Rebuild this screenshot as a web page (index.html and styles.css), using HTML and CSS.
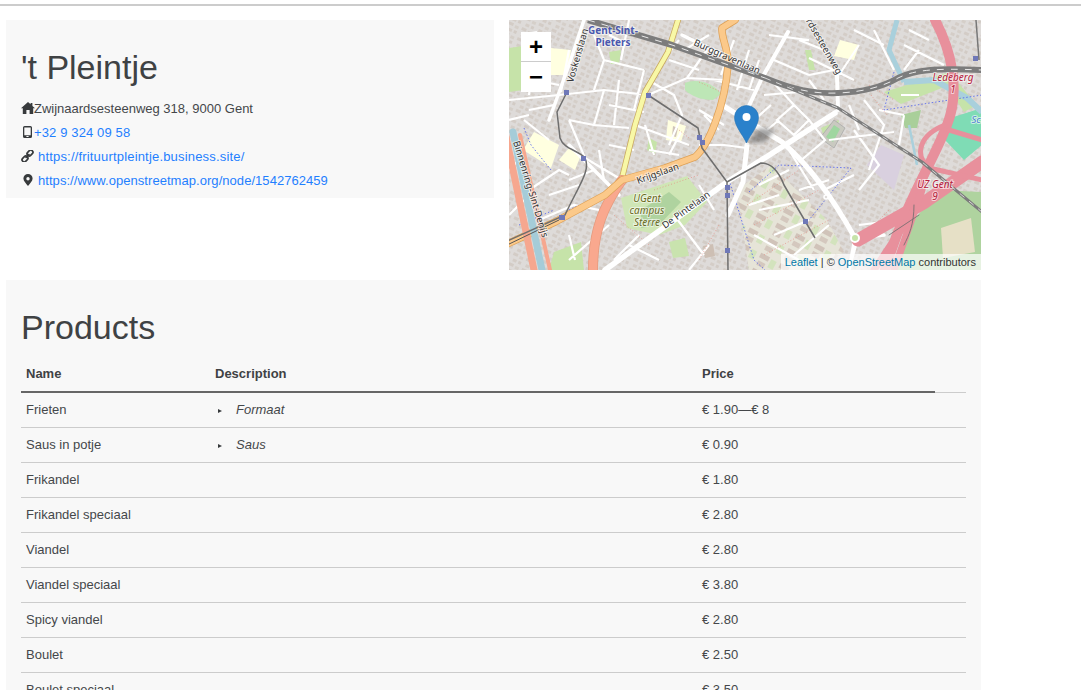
FILE: index.html
```html
<!DOCTYPE html>
<html lang="en">
<head>
    <meta charset="UTF-8">
    <meta name="viewport" content="width=device-width, initial-scale=1.0">
    <title>'t Pleintje</title>
    <link rel="stylesheet" href="styles.css">
</head>
<body>
    <div class="topline"></div>
    <main class="page">
        <div class="top-row">
            <!-- Shop details -->
            <section class="card info">
                <h2>'t Pleintje</h2>
                <ul class="contact">
                    <li>
                        <svg class="ic ic-home" viewBox="0 0 14 12"><path d="M7 0 L9.6 2.3 V1 H11.4 V3.9 L14 6.3 H12.2 V12 H8.6 V8 H5.4 V12 H1.8 V6.3 H0 Z"/></svg>Zwijnaardsesteenweg 318, 9000 Gent
                    </li>
                    <li>
                        <svg class="ic ic-phone" viewBox="0 0 9 12"><path fill-rule="evenodd" d="M1.6 0 H7.4 A1.6 1.6 0 0 1 9 1.6 V10.4 A1.6 1.6 0 0 1 7.4 12 H1.6 A1.6 1.6 0 0 1 0 10.4 V1.6 A1.6 1.6 0 0 1 1.6 0 Z M1.3 1.4 V9.2 H7.7 V1.4 Z M3.4 10 V11 H5.6 V10 Z"/></svg><a href="#" class="tel">+32 9 324 09 58</a>
                    </li>
                    <li>
                        <svg class="ic ic-link" viewBox="0 0 13 12"><g fill="none" stroke="#373a3c" stroke-width="1.7"><rect x="5.8" y="0.9" width="6.4" height="4.2" rx="2" transform="rotate(-45 9 3)"/><rect x="0.8" y="6.9" width="6.4" height="4.2" rx="2" transform="rotate(-45 4 9)"/><path d="M4.6 8 L8.4 4"/></g></svg><a href="#" class="site">https://frituurtpleintje.business.site/</a>
                    </li>
                    <li>
                        <svg class="ic ic-pin" viewBox="0 0 10 12"><path fill-rule="evenodd" d="M5 0 A4.6 4.6 0 0 1 9.6 4.6 C9.6 7.2 6.8 9.8 5 12 C3.2 9.8 0.4 7.2 0.4 4.6 A4.6 4.6 0 0 1 5 0 Z M5 3 A1.7 1.7 0 1 0 5 6.4 A1.7 1.7 0 1 0 5 3 Z"/></svg><a href="#" class="osm">https://www.openstreetmap.org/node/1542762459</a>
                    </li>
                </ul>
            </section>

            <!-- Map -->
            <div class="map">
                <svg class="map-tiles" viewBox="0 0 472 250" width="472" height="250">
                    <defs>
                        <pattern id="houses" width="14" height="11" patternUnits="userSpaceOnUse" patternTransform="rotate(24)">
                            <rect width="14" height="11" fill="#dedbd9"/>
                            <rect x="1" y="1" width="5" height="3" fill="#d3ccc6"/>
                            <rect x="8" y="2" width="4" height="3" fill="#d5cfc9"/>
                            <rect x="3" y="7" width="4" height="3" fill="#d4cdc7"/>
                            <rect x="9" y="7" width="3" height="3" fill="#d2cbc5"/>
                        </pattern>
                        <pattern id="campus" width="22" height="17" patternUnits="userSpaceOnUse" patternTransform="rotate(28)">
                            <rect width="22" height="17" fill="#e6e4d8"/>
                            <rect x="2" y="2" width="10" height="5" fill="#d0c3b9"/>
                            <rect x="14" y="3" width="6" height="9" fill="#d3e3bd"/>
                            <rect x="3" y="10" width="8" height="5" fill="#d4c8be"/>
                        </pattern>
                        <filter id="soft"><feGaussianBlur stdDeviation="2"/></filter>
                    </defs>

                    <rect width="472" height="250" fill="url(#houses)"/>

                    <!-- landuse -->
                    <g>
                        <path fill="url(#campus)" d="M228 170 L262 145 L318 200 L335 232 L310 250 L240 250 Z"/>
                        <path fill="url(#houses)" d="M120 172 L170 152 L205 178 L215 250 L95 250 Z"/>
                        <path fill="#cfe6b5" d="M112 178 L178 156 L198 182 L176 205 L150 215 L118 208 Z"/>
                        <path fill="#afd39f" d="M132 190 L160 172 L172 182 L150 205 L132 208 Z"/>
                        <path fill="#c9e3ae" d="M160 222 L176 218 L180 236 L164 238 Z"/>
                        <path fill="#cdbfb4" d="M194 226 L204 224 L206 236 L196 238 Z"/>
                        <path fill="#ffffe0" d="M25 112 L50 125 L42 148 L30 140 L14 130 Z"/>
                        <path fill="#ffffe0" d="M42 28 L62 30 L58 55 L42 55 Z"/>
                        <path fill="#ffffe0" d="M159 100 L177 106 L172 122 L157 120 Z"/>
                        <path fill="#d0c5ba" d="M164 106 L169 108 L167 117 L163 116 Z"/>
                        <path fill="#ffffe0" d="M331 20 L350 25 L345 40 L325 36 Z"/>
                        <path fill="#bde6b6" d="M176 63 C185 58 205 62 212 74 L204 80 C192 80 182 76 176 70 Z"/>
                        <path fill="#d9d0df" d="M372 125 L395 135 L385 170 L358 145 Z"/>
                        <path fill="#a9cf9a" d="M392 95 L412 90 L408 108 L396 108 Z"/>
                        <path fill="#7fdcb5" d="M435 100 L473 88 L473 125 L455 140 L436 120 Z"/>
                        <path fill="#afd39f" d="M395 212 L430 170 L473 172 L473 250 L385 250 Z"/>
                        <path fill="#e6e0c6" d="M432 208 L462 198 L466 232 L434 238 Z"/>
                        <path fill="#c6e3a9" d="M375 72 L440 52 L468 85 L455 92 L438 66 L392 84 Z"/>
                        <path fill="#c6e3a9" d="M0 28 L14 26 L14 70 L0 72 Z"/>
                        <path fill="#c6e3a9" d="M312 108 L330 100 L326 124 L316 120 Z"/>
                        <path fill="#c6e3a9" d="M45 232 L72 222 L75 250 L40 250 Z"/>
                        <path fill="#c6e3a9" d="M100 32 L112 30 L110 44 L102 44 Z"/>
                        <path fill="#c6e3a9" d="M296 30 L302 30 L306 50 L300 50 Z"/>
                        <path fill="#c6e3a9" d="M140 118 L148 122 L146 134 L138 130 Z"/>
                        <path fill="#ffffe0" d="M60 128 L72 135 L66 150 L50 140 Z"/>
                        <!-- sports pitch -->
                        <path fill="#c9c9c0" stroke="#aaa" stroke-width="0.8" d="M325 100 L336 108 L325 128 L311 118 Z"/>
                        <path fill="#9fd6a0" d="M325 105 L331 109 L324 122 L317 117 Z"/>
                    </g>

                    <!-- small streets -->
                    <path fill="none" stroke="#fff" stroke-width="2.2" d="
                        M0 80 L50 75 L95 70 L139 75 M95 70 L85 105 L60 100 M85 105 L120 108
                        M60 100 L76 138 M76 138 L113 160 M20 170 L50 150 L60 155 M30 200 L65 185 L90 190
                        M60 30 L52 72 M85 15 L95 40 L135 50 M95 40 L85 70 M135 50 L125 90
                        M139 75 L178 58 L216 60 M178 58 L198 30 M150 45 L170 20
                        M139 60 L165 75 L173 95 L160 125 M126 105 L180 125 M190 125 L215 125 L238 128
                        M205 60 L245 70 M240 70 L250 40 M215 105 L190 90
                        M285 85 L300 100 L285 115 L268 100 Z M300 100 L316 120 L290 142
                        M265 40 L300 55 M300 55 L325 50 M350 25 L330 55 M365 10 L385 50 M345 60 L300 38
                        M245 143 L270 130 M280 130 L305 170 M345 110 L370 145 L350 170 M320 120 L385 112
                        M355 80 L375 105 L360 150 M392 75 L410 75 M395 25 L435 45
                        M60 215 L66 240 M100 205 L60 240 M165 195 L195 235 M200 225 L180 250
                        M290 170 L320 160 M250 190 L300 180 M315 170 L345 155 M350 205 L390 200 M350 215 L340 250
                        M12 15 L28 12 M0 100 L20 95 M140 130 L170 135 M136 105 L145 135 M0 195 L15 180
                        M100 85 L135 92 M110 60 L105 105 M100 125 L125 130 M90 130 L95 160 M60 160 L85 150
                        M20 90 L45 85 M15 100 L40 120 M25 60 L50 65 M25 30 L20 75 M100 15 L120 25 M120 0 L112 40
                        M160 40 L190 50 M175 30 L205 40 M200 15 L175 30 M225 20 L212 55 M240 30 L228 70
                        M160 135 L172 112 M195 95 L210 110 M245 100 L262 85 M258 110 L270 100 M255 75 L290 72
                        M262 60 L285 85 M300 60 L315 80 M340 85 L350 110 M370 90 L395 95 M395 95 L390 125
                        M400 10 L420 20 M410 30 L395 50 M345 10 L375 25 M290 20 L320 32 M260 15 L300 20
                        M280 150 L250 165 M270 175 L240 185 M300 200 L265 215 M320 205 L285 235 M245 215 L290 240
                        M120 225 L150 240 M105 240 L130 215 M190 165 L205 190 M0 150 L10 140 M40 175 L70 165
                    "/>
                    <!-- fences and paths -->
                    <path fill="none" stroke="#e58a80" stroke-width="0.7" stroke-dasharray="1 2" d="M238 185 L290 150 M245 205 L310 170 M255 235 L320 200 M190 62 L212 72 M170 110 L180 118 M145 170 L190 155 M360 65 L385 80 M362 75 L378 95 M210 205 L190 240 M105 195 L140 225 M380 190 L360 210"/>

                    <!-- water -->
                    <path fill="none" stroke="#a9d0dc" stroke-width="5" d="M388 0 L380 30 L395 62"/>
                    <path fill="none" stroke="#a9d0dc" stroke-width="6" d="M395 62 L425 60 L458 78 L473 92"/>
                    <path fill="none" stroke="#a9d0dc" stroke-width="2.5" d="M400 105 L408 145"/>

                    <!-- boundaries -->
                    <path fill="none" stroke="#4a5cf0" stroke-width="0.8" stroke-dasharray="1.5 2" d="M15 108 L22 125 L42 150 M220 160 L245 240 L256 250 M240 172 L270 145 L342 148 M385 52 L375 90 L473 75 M342 148 L300 200 M10 205 L45 190 M60 190 L70 185"/>

                    <!-- main roads -->
                    <g fill="none" stroke-linejoin="round" stroke-linecap="round">
                        <path stroke="#fff" stroke-width="5.5" d="M96 250 L218 162 L326 93"/>
                        <path stroke="#fff" stroke-width="5" d="M213 85 L273 122 C300 145 322 175 346 218"/>
                        <path stroke="#fff" stroke-width="5" d="M238 125 L234 162 L219 195"/>
                        <path stroke="#fff" stroke-width="4" d="M279 12 L253 58 L239 88"/>
                        <path stroke="#fff" stroke-width="4" d="M328 55 L329 90"/>
                        <path stroke="#fff" stroke-width="3.5" d="M173 15 L240 48 M60 125 L110 175"/>
                        <path stroke="#fff" stroke-width="3.5" d="M346 218 L340 250 M346 218 L375 215"/>
                        <path stroke="#fff" stroke-width="3.5" d="M75 0 L60 45 L40 100"/>
                        <path stroke="#c9a85e" stroke-width="6" d="M169 0 L159 32 L136 72 L126 105 L113 158"/>
                        <path stroke="#f8f8a6" stroke-width="4.5" d="M169 0 L159 32 L136 72 L126 105 L113 158"/>
                        <path stroke="#e59a7e" stroke-width="10" d="M113 160 C95 185 84 210 84 250"/>
                        <path stroke="#f9a88e" stroke-width="8.5" d="M113 160 C95 185 84 210 84 250"/>
                        <path stroke="#dea055" stroke-width="7.5" d="M-4 225 L46 202 L96 175 L113 160 L156 148 L186 137 C200 125 216 85 219 45 C220 30 212 18 213 8 L226 0"/>
                        <path stroke="#fbc98a" stroke-width="6" d="M-4 225 L46 202 L96 175 L113 160 L156 148 L186 137 C200 125 216 85 219 45 C220 30 212 18 213 8 L226 0"/>
                        <path stroke="#f6a78f" stroke-width="7" d="M-4 112 L25 250"/>
                        <path stroke="#a5ccd8" stroke-width="7" d="M4 112 L33 250"/>
                        <path stroke="#f6a78f" stroke-width="4" d="M11 115 L41 250"/>
                        <path stroke="#e8909c" stroke-width="10" d="M426 0 C442 30 452 70 438 105 C425 140 395 185 376 250"/>
                        <path stroke="#e8909c" stroke-width="13" d="M473 142 L416 182 L349 220"/>
                        <path stroke="#e8909c" stroke-width="5" d="M436 105 C410 115 405 135 420 148 L473 160 M420 148 L395 210 M440 110 L473 120"/>
                        <path stroke="#e8909c" stroke-width="7" d="M413 170 L385 250 M365 250 L405 190"/>
                        <path stroke="#6b6b6b" stroke-width="0.8" d="M405 185 C405 205 400 215 395 225 M380 215 L410 195"/>
                    </g>

                    <!-- rail and tram -->
                    <g fill="none" stroke-linejoin="round">
                        <path stroke="#7c7c7c" stroke-width="6" d="M79 0 L163 25 L256 58 C285 70 305 74 329 73 C355 72 375 66 389 58 C405 50 425 48 473 50"/>
                        <path stroke="#e8e8e8" stroke-width="1" stroke-dasharray="7 7" d="M79 0 L163 25 L256 58 C285 70 305 74 329 73 C355 72 375 66 389 58 C405 50 425 48 473 50"/>
                        <path stroke="#7c7c7c" stroke-width="3" d="M256 58 L329 88 L413 142 L473 192"/>
                        <path stroke="#eee" stroke-width="0.8" stroke-dasharray="6 6" d="M256 58 L329 88 L413 142 L473 192"/>
                        <path stroke="#6e6e6e" stroke-width="1.5" d="M139 75 L189 108 L193 128 L218 162 L219 250"/>
                        <path stroke="#6e6e6e" stroke-width="1.5" d="M218 162 L252 143 C262 143 270 152 275 165 L306 218"/>
                        <path stroke="#6e6e6e" stroke-width="1.5" d="M58 72 L48 92 L51 118 C55 130 70 130 76 138 C82 150 70 165 56 195 L-4 222"/>
                        <path stroke="#555" stroke-width="1" d="M-4 226 L50 200"/>
                        <path stroke="#777" stroke-width="1.5" d="M467 0 L470 40"/>
                    </g>
                    <g fill="#6f78b8">
                        <rect x="55" y="70" width="5" height="5"/>
                        <rect x="137" y="73" width="5" height="5"/>
                        <rect x="188" y="115" width="5" height="5"/>
                        <rect x="191" y="120" width="5" height="5"/>
                        <rect x="72" y="136" width="5" height="5"/>
                        <rect x="50" y="195" width="6" height="5"/>
                        <rect x="216" y="165" width="5" height="5"/>
                        <rect x="216" y="173" width="5" height="5"/>
                        <rect x="216" y="228" width="5" height="5"/>
                        <rect x="294" y="199" width="5" height="5"/>
                        <rect x="464" y="36" width="5" height="5"/>
                    </g>
                    <circle cx="346" cy="218" r="4" fill="#c6e3a9" stroke="#fff" stroke-width="2"/>
                    <circle cx="317" cy="177" r="2" fill="#dfdcda" stroke="#fff" stroke-width="1.5"/>

                    <!-- labels -->
                    <g class="lbl">
                        <text class="lbl-station" x="104" y="14">Gent-Sint-</text>
                        <text class="lbl-station" x="104" y="26">Pieters</text>
                        <text x="64" y="63" transform="rotate(-74 64 63)">Voskenslaan</text>
                        <text x="184" y="25" transform="rotate(24 184 25)">Burggravenlaan</text>
                        <text class="lbl-end" x="328" y="55" transform="rotate(60 328 55)">Zwijnaardsesteenweg</text>
                        <text x="129" y="164" transform="rotate(-20 129 164)">Krijgslaan</text>
                        <text x="156" y="209" transform="rotate(-36 156 209)">De Pintelaan</text>
                        <text x="4" y="122" transform="rotate(73 4 122)">Binnenring-Sint-Denijs</text>
                        <text class="lbl-campus" x="138" y="182">UGent</text>
                        <text class="lbl-campus" x="138" y="194">campus</text>
                        <text class="lbl-campus" x="138" y="206">Sterre</text>
                        <text class="lbl-ring" x="444" y="61">Ledeberg</text>
                        <text class="lbl-ring" x="444" y="73">1</text>
                        <text class="lbl-ring" x="426" y="168">UZ Gent</text>
                        <text class="lbl-ring" x="426" y="180">9</text>
                        <text class="lbl-water" x="467" y="103">Sc</text>
                    </g>

                    <!-- marker -->
                    <path fill="#333" opacity="0.45" filter="url(#soft)" d="M238 123 L250 108 L266 110 L256 122 Z"/>
                    <path fill="#2a81cb" stroke="#2573b5" stroke-width="0.6" d="M237.5 123 C234 115 225.5 106 225.5 97.5 A12 12 0 0 1 249.5 97.5 C249.5 106 241 115 237.5 123 Z"/>
                    <circle cx="237.5" cy="97" r="4" fill="#fff"/>
                </svg>

                <div class="zoom">
                    <a href="#" class="zoom-btn">+</a>
                    <a href="#" class="zoom-btn">&minus;</a>
                </div>
                <div class="attribution"><a href="#">Leaflet</a> | © <a href="#">OpenStreetMap</a> contributors</div>
            </div>
        </div>

        <!-- Product list -->
        <section class="card products">
            <h2>Products</h2>
            <table>
                <thead>
                    <tr>
                        <th class="col-name">Name</th>
                        <th class="col-desc">Description</th>
                        <th class="col-price">Price</th>
                        <th class="col-rest"></th>
                    </tr>
                </thead>
                <tbody>
                    <tr><td>Frieten</td><td><span class="toggle">Formaat</span></td><td>€ 1.90—€ 8</td><td></td></tr>
                    <tr><td>Saus in potje</td><td><span class="toggle">Saus</span></td><td>€ 0.90</td><td></td></tr>
                    <tr><td>Frikandel</td><td></td><td>€ 1.80</td><td></td></tr>
                    <tr><td>Frikandel speciaal</td><td></td><td>€ 2.80</td><td></td></tr>
                    <tr><td>Viandel</td><td></td><td>€ 2.80</td><td></td></tr>
                    <tr><td>Viandel speciaal</td><td></td><td>€ 3.80</td><td></td></tr>
                    <tr><td>Spicy viandel</td><td></td><td>€ 2.80</td><td></td></tr>
                    <tr><td>Boulet</td><td></td><td>€ 2.50</td><td></td></tr>
                    <tr><td>Boulet speciaal</td><td></td><td>€ 3.50</td><td></td></tr>
                </tbody>
            </table>
        </section>
    </main>
</body>
</html>
```

FILE: styles.css
```css
/* Basic styles for the page */
html, body {
    height: 690px;
    overflow: hidden;
}

body {
    margin: 0;
    background-color: #fff;
    color: #44474a;
    font-family: "Liberation Sans", Arial, sans-serif;
    font-size: 13px;
    line-height: 21px;
}

a {
    color: #1f7fff;
    text-decoration: none;
}

h2 {
    margin: 0 0 10px;
    font-size: 34px;
    font-weight: 400;
    line-height: 38px;
    color: #3f4244;
}

.topline {
    height: 2px;
    margin-top: 4px;
    background-color: #ccc;
}

.page {
    width: 975px;
    margin: 14px 0 0 6px;
}

.top-row {
    display: flex;
    gap: 15px;
    align-items: flex-start;
    margin-bottom: 10px;
}

.card {
    background-color: #f8f8f8;
    padding: 28px 15px 6px;
}

/* Shop details */
.info {
    width: 488px;
    box-sizing: border-box;
}

.contact {
    list-style-type: none;
    margin: 0;
    padding: 0;
}

.contact li {
    display: flex;
    align-items: center;
    height: 24px;
}

.tel {
    letter-spacing: 0.13px;
}

.site {
    letter-spacing: 0.18px;
}

.osm {
    letter-spacing: 0.05px;
}

.ic {
    display: block;
    flex: none;
    fill: #373a3c;
}

.ic-home {
    width: 14px;
    height: 12px;
    margin-right: -1px;
}

.ic-phone {
    width: 9px;
    height: 12px;
    margin-left: 2px;
    margin-right: 2px;
}

.ic-link {
    width: 13px;
    height: 12px;
    margin-right: 4px;
}

.ic-pin {
    width: 10px;
    height: 12px;
    margin-left: 2px;
    margin-right: 5px;
}

/* Map */
.map {
    position: relative;
    width: 472px;
    height: 250px;
    overflow: hidden;
    flex: none;
}

.map-tiles {
    display: block;
}

.lbl text {
    font-family: "Noto Sans", sans-serif;
    font-size: 9.5px;
    fill: #333;
    stroke: #fff;
    stroke-width: 2px;
    stroke-opacity: 0.6;
    paint-order: stroke;
    text-anchor: start;
}

.lbl .lbl-end {
    text-anchor: end;
}

.lbl .lbl-station {
    font-size: 10px;
    font-weight: 700;
    fill: #4a58ae;
    text-anchor: middle;
}

.lbl .lbl-campus {
    font-style: italic;
    font-size: 10px;
    fill: #6a6a22;
    text-anchor: middle;
}

.lbl .lbl-ring {
    font-style: italic;
    font-size: 10px;
    fill: #b5203c;
    text-anchor: middle;
}

.lbl .lbl-water {
    font-style: italic;
    fill: #4a7fd0;
    text-anchor: middle;
}

.zoom {
    position: absolute;
    top: 12px;
    left: 12px;
    width: 30px;
    background-color: #fff;
}

.zoom-btn {
    display: block;
    height: 30px;
    font-size: 24px;
    font-weight: 700;
    line-height: 30px;
    text-align: center;
    color: #000;
}

.zoom-btn:first-child {
    height: 29px;
    border-bottom: 1px solid #ccc;
}

.attribution {
    position: absolute;
    right: 0;
    bottom: 0;
    padding: 0 5px 0 4px;
    background-color: rgba(255, 255, 255, 0.7);
    font-size: 11px;
    line-height: 16px;
    color: #333;
}

.attribution a {
    color: #0078a8;
}

/* Products */
.products {
    padding-bottom: 0;
}

table {
    width: 945px;
    border-collapse: collapse;
    table-layout: fixed;
}

th, td {
    padding: 6px 5px 7px;
    text-align: left;
    border-bottom: 1px solid #ccc;
}

th {
    padding: 7px 5px;
    font-weight: 700;
    color: #3f4244;
    border-bottom: 2px solid #666;
}

.col-name {
    width: 179px;
}

.col-desc {
    width: 477px;
}

.col-price {
    width: 228px;
}

.col-rest {
    border-bottom: 1px solid #ccc;
}

/* Collapsed description, closed triangle in front of the label */
.toggle {
    font-style: italic;
}

.toggle::before {
    content: "";
    display: inline-block;
    margin: 0 14px 1px 3px;
    border-left: 4px solid #373a3c;
    border-top: 2.5px solid transparent;
    border-bottom: 2.5px solid transparent;
}
```
